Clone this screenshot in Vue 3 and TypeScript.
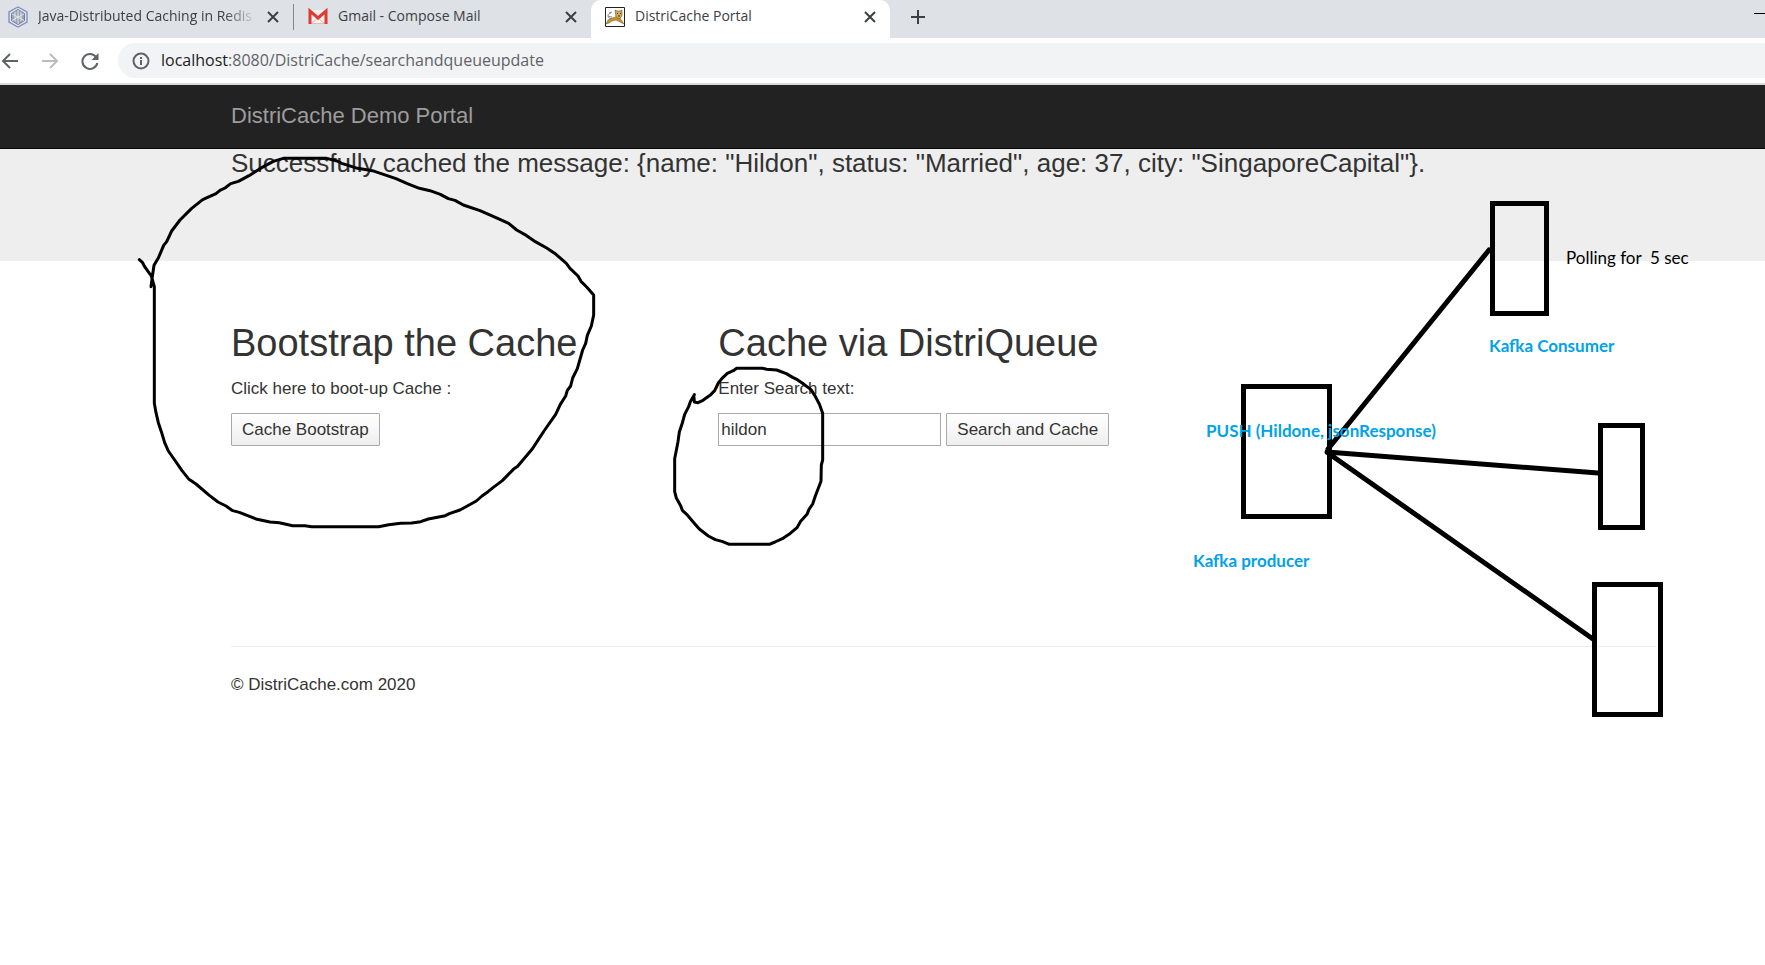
<script setup lang="ts">
import { ref } from 'vue'

interface Box { x: number; y: number; w: number; h: number }

const query = ref('hildon')
const boxes: Box[] = [
  { x: 1241, y: 384, w: 91, h: 135 },
  { x: 1490, y: 201, w: 59, h: 115 },
  { x: 1598, y: 423, w: 47, h: 107 },
  { x: 1592, y: 582, w: 71, h: 135 },
]
const outline = (b: Box): string =>
  `M${b.x} ${b.y}h${b.w}v${b.h}h${-b.w}zM${b.x + 5} ${b.y + 5}h${b.w - 10}v${b.h - 10}h${10 - b.w}z`
</script>

<template>
  <div class="screen">
    <header class="browser">
      <div class="tabs">
        <div class="tab first">
          <svg class="fav" viewBox="0 0 20 22" aria-hidden="true">
            <path d="M10 1l9 5v10l-9 5-9-5V6z" fill="#dfe3ee" stroke="#7f90c8" stroke-width="1.4" />
            <path d="M10 3.500l6.500 4v7L10 18.500l-6.500-4v-7z" fill="#9aa3b0" stroke="#76808e" />
            <path d="M10 4v14M4 8l6 3 6-3M4 14.500l6-3.500 6 3.500M7 5.500v10M13 5.500v10" fill="none" stroke="#e4e8ee" />
          </svg>
          <span class="title fade">Java-Distributed Caching in Redis</span>
          <button class="icon" aria-label="Close tab"><svg viewBox="0 0 12 12"><path d="M1 1l10 10M11 1L1 11" /></svg></button>
        </div>
        <div class="tab second">
          <svg class="fav" viewBox="0 0 20 16" aria-hidden="true">
            <path d="M1 1h18v14H1z" fill="#f7eeee" />
            <path d="M4 14l6-5 6 5M3 14.500h14" fill="none" stroke="#e3b9b9" />
            <path d="M2 15V2l8 7 8-7v13" fill="none" stroke="#dd3b35" stroke-width="3" />
          </svg>
          <span class="title">Gmail - Compose Mail</span>
          <button class="icon" aria-label="Close tab"><svg viewBox="0 0 12 12"><path d="M1 1l10 10M11 1L1 11" /></svg></button>
        </div>
        <div class="tab active">
          <svg class="fav" viewBox="0 0 20 20" aria-hidden="true">
            <path d="M.5.5h19v19H.5z" fill="#fff" stroke="#222" />
            <path d="M6 6C3 6 2 9 4 11l3 1M4 6l3-1M3 9l4 1" fill="none" stroke="#8a8a8a" />
            <path d="M1 17l2-4 4-2 4-1 4 1 2 3 2 3-4-2-4-2-4 1-3 2z" fill="#c8922e" stroke="#705222" stroke-width=".5" />
            <path d="M10 3l2 1h3l2-1v6l-3 3-3-2z" fill="#d3ac55" stroke="#6b5327" stroke-width=".6" />
            <path d="M12 6.500h1M15 6.500h1M13 9h2" stroke="#333" />
          </svg>
          <span class="title">DistriCache Portal</span>
          <button class="icon" aria-label="Close tab"><svg viewBox="0 0 12 12"><path d="M1 1l10 10M11 1L1 11" /></svg></button>
        </div>
        <button class="icon plus" aria-label="New tab"><svg viewBox="0 0 16 16"><path d="M8 1v14M1 8h14" /></svg></button>
        <button class="icon minimize" aria-label="Minimize"><span></span></button>
      </div>
      <div class="toolbar">
        <button class="icon nav" aria-label="Back"><svg viewBox="0 0 18 18"><path d="M17 9H2M9 2L2 9l7 7" /></svg></button>
        <button class="icon nav off" aria-label="Forward"><svg viewBox="0 0 18 18"><path d="M1 9h15M9 2l7 7-7 7" /></svg></button>
        <button class="icon nav" aria-label="Reload"><svg viewBox="0 0 18 18"><path d="M15 5a7.500 7.500 0 1 0 1.300 6" /><path d="M17.500 1v7h-7z" class="solid" /></svg></button>
        <div class="address">
          <svg class="info" viewBox="0 0 18 18" aria-hidden="true"><circle cx="9" cy="9" r="7.500" /><path d="M9 8v5M9 5v2" /></svg>
          <span><b>localhost</b>:8080/DistriCache/searchandqueueupdate</span>
        </div>
      </div>
    </header>

    <nav class="navbar"><a href="#">DistriCache Demo Portal</a></nav>
    <section class="banner">
      <p>Successfully cached the message: {name: "Hildon", status: "Married", age: 37, city: "SingaporeCapital"}.</p>
    </section>
    <main>
      <div class="columns">
        <section>
          <h2>Bootstrap the Cache</h2>
          <p>Click here to boot-up Cache :</p>
          <button class="action">Cache Bootstrap</button>
        </section>
        <section>
          <h2>Cache via DistriQueue</h2>
          <p><label for="search">Enter Search text:</label></p>
          <form class="search" @submit.prevent>
            <input id="search" v-model="query" type="text" />
            <button class="action">Search and Cache</button>
          </form>
        </section>
      </div>
      <footer>© DistriCache.com 2020</footer>
    </main>

    <svg class="ink">
      <svg x="120" y="130" width="500" height="420" viewBox="0 0 1500 1260">
        <path class="pen" d="M58 389L67 397 74 410 84 424 94 438 103 470V820L108 848 115 878 124 905 134 938 145 963 164 990 186 1022 207 1048 228 1062 268 1096 294 1116 318 1128 338 1142 358 1147 411 1168 450 1176 478 1178 518 1187 555 1187 575 1190H776L806 1184 842 1180 875 1179 902 1175 925 1167 976 1157 988 1151 1020 1140 1069 1113 1086 1098 1104 1085 1120 1072 1147 1052 1180 1018 1193 1009 1236 958 1272 903 1307 853 1321 823 1337 798 1342 781 1352 768 1358 744 1372 716 1388 660 1397 640 1402 616 1414 588 1421 555V495L1400 471 1383 454 1374 438 1350 415 1339 400 1308 373 1280 354 1246 335 1220 317 1190 300 1166 280 1133 265 1080 242 1030 225 1005 211 985 206 961 193 930 182 898 175 862 161 828 146 757 122 713 115 665 100 651 93 620 85H490L460 94 425 113 387 137 355 154 332 161 315 174 300 181 288 191 248 209 215 235 180 270 155 303 140 335 131 346 115 384 102 406 97 440 93 470" />
      </svg>
      <svg x="640" y="300" width="500" height="260" viewBox="0 0 1500 780">
        <path class="pen" d="M163 284L151 305 146 320 134 343 127 369 118 396 114 425 104 476V575L109 594 122 617 127 631 140 643 164 671 178 687 205 708 226 719 246 724 268 733H388L405 726 427 716 447 703 471 683 482 664 501 643 507 628 518 612 526 588 543 544 544 495 548 480V340L538 312 524 286 513 269 492 253 472 239 458 232 439 221 410 210 380 208 367 205H290L280 212 262 220 246 235 235 249 224 272 210 286 189 301 174 308 163 306 162 291" />
      </svg>
      <path v-for="b in boxes" :key="b.x" :d="outline(b)" fill-rule="evenodd" />
      <path class="link" d="M1489 250L1328 449M1327 452L1598 473M1328 453L1593 639" />
      <text x="1566" y="264">Polling for&nbsp; 5 sec</text>
      <g class="blue">
        <text x="1489" y="352">Kafka Consumer</text>
        <text x="1206" y="437">PUSH (Hildone, jsonResponse)</text>
        <text x="1193" y="567">Kafka producer</text>
      </g>
    </svg>
  </div>
</template>

<style>
body { margin: 0; background: #fff; }
</style>

<style scoped>
* { box-sizing: border-box; }
.screen { position: relative; min-height: 100vh; overflow: hidden; color: #333; font: 17px/25px "Liberation Sans", Arial, sans-serif; }
button { font: inherit; color: inherit; }
.browser { border-bottom: 2px solid #d8dadd; font-family: "Open Sans", "Noto Sans", sans-serif; color: #3c4043; }
.tabs { display: flex; height: 38px; background: #dee1e6; overflow: hidden; }
.tab { display: flex; align-items: center; height: 34px; font-size: 14px; }
.tab .fav { width: 20px; height: 22px; flex: none; margin-right: 10px; }
.title { flex: 1; line-height: 24px; padding-bottom: 2px; white-space: nowrap; overflow: hidden; }
.fade { mask-image: linear-gradient(to right, #000 85%, transparent); }
.icon { display: flex; align-items: center; justify-content: center; border: 0; padding: 0; background: none; }
.icon svg { width: 12px; height: 12px; fill: none; stroke: #3c4043; stroke-width: 2; }
.first { width: 293px; padding: 0 14px 0 8px; }
.first .title { margin-right: 10px; }
.second { width: 298px; padding: 0 14px; }
.second::before { content: ""; align-self: center; width: 1px; height: 26px; margin: 0 14px 0 -14px; background: #80868b; }
.active { width: 299px; height: 38px; padding: 0 14px 4px; background: #fff; border-radius: 10px 10px 0 0; }
.plus { width: 56px; height: 34px; }
.plus svg { width: 16px; height: 16px; }
.minimize { margin-left: auto; width: 11px; height: 27px; }
.minimize span { width: 11px; height: 1px; background: #000; }
.toolbar { display: flex; align-items: center; height: 45px; }
.nav { width: 40px; height: 35px; }
.nav:first-child { width: 20px; margin-right: 10px; }
.nav svg { width: 18px; height: 18px; stroke: #5f6368; }
.nav.off svg { stroke: #babcbe; }
.nav .solid { fill: #5f6368; stroke: none; }
.address { flex: 1; display: flex; align-items: center; gap: 11px; height: 35px; margin-left: 8px; padding-left: 14px; border-radius: 18px 0 0 18px; background: #f1f3f4; color: #5f6368; font-size: 16px; }
.address b { font-weight: 400; color: #202124; }
.info { width: 18px; height: 18px; fill: none; stroke: #5f6368; stroke-width: 2; }
.navbar { height: 64px; padding: 0 109px 0 231px; background: #222; border-bottom: 1px solid #080808; }
.navbar a { font-size: 22px; line-height: 62px; color: #9d9d9d; text-decoration: none; }
.banner { height: 112px; padding: 0 109px 0 231px; background: #eee; }
.banner p { margin: 0; font-size: 26px; line-height: 28px; white-space: nowrap; }
main { padding: 57px 109px 0 231px; }
.columns { display: grid; grid-template-columns: repeat(3, 1fr); gap: 37px; min-height: 328px; }
h2 { margin: 0 0 12px; padding-top: 4px; font-size: 38px; line-height: 42px; font-weight: 400; white-space: nowrap; }
.columns p { margin: 0 0 12px; }
.action { height: 33px; padding: 0 10px; border: 1px solid #a9a9a9; border-radius: 1px; background: linear-gradient(#fff, #eee); white-space: nowrap; }
.search { display: flex; gap: 5px; }
.search input { flex: none; width: 223px; height: 33px; padding: 0 2px; border: 1px solid #a9a9a9; background: #fff; color: #333; font: inherit; }
footer { border-top: 1px solid #eee; padding-top: 25px; }
.ink { position: absolute; top: 0; left: 0; width: 100%; height: 100%; pointer-events: none; font: 17px Lato, sans-serif; }
.pen { fill: none; stroke: #000; stroke-width: 9; stroke-linecap: round; stroke-linejoin: round; }
.link { stroke: #000; stroke-width: 5; stroke-linecap: round; }
.blue { fill: #00a2e8; font-weight: 700; }
</style>
